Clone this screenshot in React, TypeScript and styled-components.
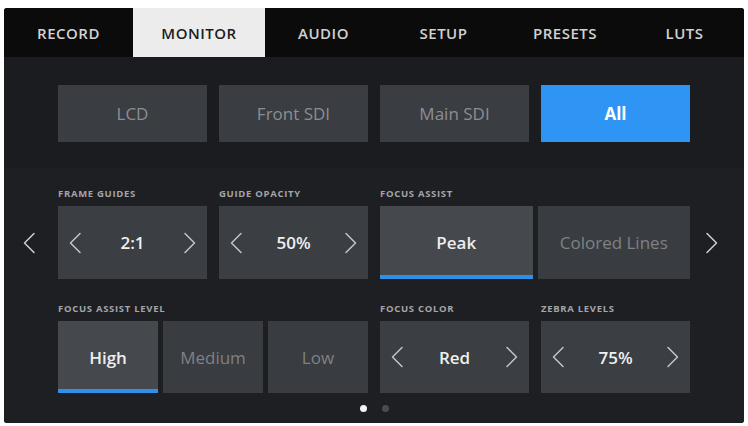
import React from "react";
import styled, { createGlobalStyle } from "styled-components";

const Global = createGlobalStyle`
  html, body { margin: 0; padding: 0; background: #ffffff; }
  body { font-family: "Open Sans", "Noto Sans", sans-serif; }
`;

const Screen = styled.div`
  margin: 8px 4px 0 4px;
  width: 740px;
  height: 415px;
  background: #1a1c1f;
  border-radius: 3px;
  overflow: hidden;
  display: flex;
  flex-direction: column;
`;

const TabBar = styled.div`
  height: 49px;
  background: #0b0b0c;
  display: flex;
`;

const Tab = styled.div<{ $w: number; $active?: boolean }>`
  width: ${(p) => p.$w}px;
  display: flex;
  align-items: center;
  justify-content: center;
  font-size: 15px;
  font-weight: 600;
  letter-spacing: 0.5px;
  color: ${(p) => (p.$active ? "#1c1c1c" : "#d2d2d2")};
  background: ${(p) => (p.$active ? "#ececec" : "transparent")};
`;

const OutputRow = styled.div`
  display: grid;
  grid-template-columns: repeat(4, 149px);
  column-gap: 12px;
  padding: 28px 0 0 54px;
  height: 111px;
  box-sizing: border-box;
`;

const OutputButton = styled.div<{ $active?: boolean }>`
  height: 57px;
  display: flex;
  align-items: center;
  justify-content: center;
  font-size: 17px;
  font-weight: ${(p) => (p.$active ? 700 : 400)};
  color: ${(p) => (p.$active ? "#ffffff" : "#8c8e92")};
  background: ${(p) => (p.$active ? "#2f95f5" : "#3a3d42")};
`;

const Settings = styled.div`
  flex: 1;
  background: #1d1f23;
  display: flex;
  flex-direction: column;
`;

const SettingsBody = styled.div`
  display: flex;
  align-items: stretch;
`;

const SideNav = styled.div<{ $w: number; $pad?: string }>`
  width: ${(p) => p.$w}px;
  display: flex;
  align-items: flex-start;
  justify-content: center;
  padding: ${(p) => p.$pad || "0"};
  box-sizing: border-box;
  color: #cfd0d2;
`;

const Grid = styled.div`
  display: grid;
  grid-template-columns: repeat(4, 149px);
  column-gap: 12px;
  padding-top: 20px;
`;

const Group = styled.div<{ $span?: number; $mt?: number }>`
  grid-column: span ${(p) => p.$span || 1};
  display: flex;
  flex-direction: column;
  margin-top: ${(p) => p.$mt || 0}px;
`;

const Label = styled.div`
  height: 12px;
  line-height: 12px;
  font-size: 9.5px;
  font-weight: 700;
  letter-spacing: 0.7px;
  color: #a3a5a9;
  margin-bottom: 6px;
  white-space: nowrap;
`;

const Stepper = styled.div<{ $h: number }>`
  height: ${(p) => p.$h}px;
  background: #3b3e43;
  display: flex;
  align-items: center;
  justify-content: space-between;
  padding: 0 10px;
  box-sizing: border-box;
  color: #c4c5c8;
`;

const Value = styled.span`
  font-size: 17px;
  font-weight: 600;
  color: #f0f0f0;
`;

const Options = styled.div`
  display: flex;
  gap: 5px;
`;

const Option = styled.div<{ $h: number; $active?: boolean }>`
  flex: 1;
  height: ${(p) => p.$h}px;
  display: flex;
  align-items: center;
  justify-content: center;
  font-size: 17px;
  font-weight: ${(p) => (p.$active ? 600 : 400)};
  color: ${(p) => (p.$active ? "#eeeeee" : "#7f8185")};
  background: ${(p) => (p.$active ? "#45484d" : "#393c41")};
  box-sizing: border-box;
  border-bottom: 4px solid ${(p) => (p.$active ? "#2f8fea" : "transparent")};
  padding-top: 4px;
`;

const Dots = styled.div`
  display: flex;
  justify-content: center;
  gap: 15px;
  margin-top: 12px;
`;

const Dot = styled.div<{ $on?: boolean }>`
  width: 7px;
  height: 7px;
  border-radius: 50%;
  background: ${(p) => (p.$on ? "#f4f4f4" : "#4a4c50")};
`;

const Chevron = ({ dir }: { dir: "l" | "r" }) => (
  <svg width={14} height={22} viewBox="0 0 14 22" fill="none">
    <path
      d={dir === "l" ? "M12 1.5 L2.5 11 L12 20.5" : "M2 1.5 L11.5 11 L2 20.5"}
      stroke="currentColor"
      strokeWidth="1.5"
      strokeLinecap="round"
      strokeLinejoin="round"
    />
  </svg>
);

const tabs: [string, number][] = [
  ["RECORD", 129],
  ["MONITOR", 132],
  ["AUDIO", 117],
  ["SETUP", 123],
  ["PRESETS", 120],
  ["LUTS", 119],
];

export default function App() {
  return (
    <>
      <Global />
      <Screen>
        <TabBar>
          {tabs.map(([t, w]) => (
            <Tab key={t} $w={w} $active={t === "MONITOR"}>
              {t}
            </Tab>
          ))}
        </TabBar>
        <OutputRow>
          <OutputButton>LCD</OutputButton>
          <OutputButton>Front SDI</OutputButton>
          <OutputButton>Main SDI</OutputButton>
          <OutputButton $active>All</OutputButton>
        </OutputRow>
        <Settings>
          <SettingsBody>
            <SideNav $w={54} $pad="64px 4px 0 0">
              <Chevron dir="l" />
            </SideNav>
            <Grid>
              <Group>
                <Label>FRAME GUIDES</Label>
                <Stepper $h={73}>
                  <Chevron dir="l" />
                  <Value>2:1</Value>
                  <Chevron dir="r" />
                </Stepper>
              </Group>
              <Group>
                <Label>GUIDE OPACITY</Label>
                <Stepper $h={73}>
                  <Chevron dir="l" />
                  <Value>50%</Value>
                  <Chevron dir="r" />
                </Stepper>
              </Group>
              <Group $span={2}>
                <Label>FOCUS ASSIST</Label>
                <Options>
                  <Option $h={73} $active>Peak</Option>
                  <Option $h={73}>Colored Lines</Option>
                </Options>
              </Group>
              <Group $span={2} $mt={24}>
                <Label>FOCUS ASSIST LEVEL</Label>
                <Options>
                  <Option $h={72} $active>High</Option>
                  <Option $h={72}>Medium</Option>
                  <Option $h={72}>Low</Option>
                </Options>
              </Group>
              <Group $mt={24}>
                <Label>FOCUS COLOR</Label>
                <Stepper $h={72}>
                  <Chevron dir="l" />
                  <Value>Red</Value>
                  <Chevron dir="r" />
                </Stepper>
              </Group>
              <Group $mt={24}>
                <Label>ZEBRA LEVELS</Label>
                <Stepper $h={72}>
                  <Chevron dir="l" />
                  <Value>75%</Value>
                  <Chevron dir="r" />
                </Stepper>
              </Group>
            </Grid>
            <SideNav $w={54} $pad="64px 10px 0 0">
              <Chevron dir="r" />
            </SideNav>
          </SettingsBody>
          <Dots>
            <Dot $on />
            <Dot />
          </Dots>
        </Settings>
      </Screen>
    </>
  );
}
